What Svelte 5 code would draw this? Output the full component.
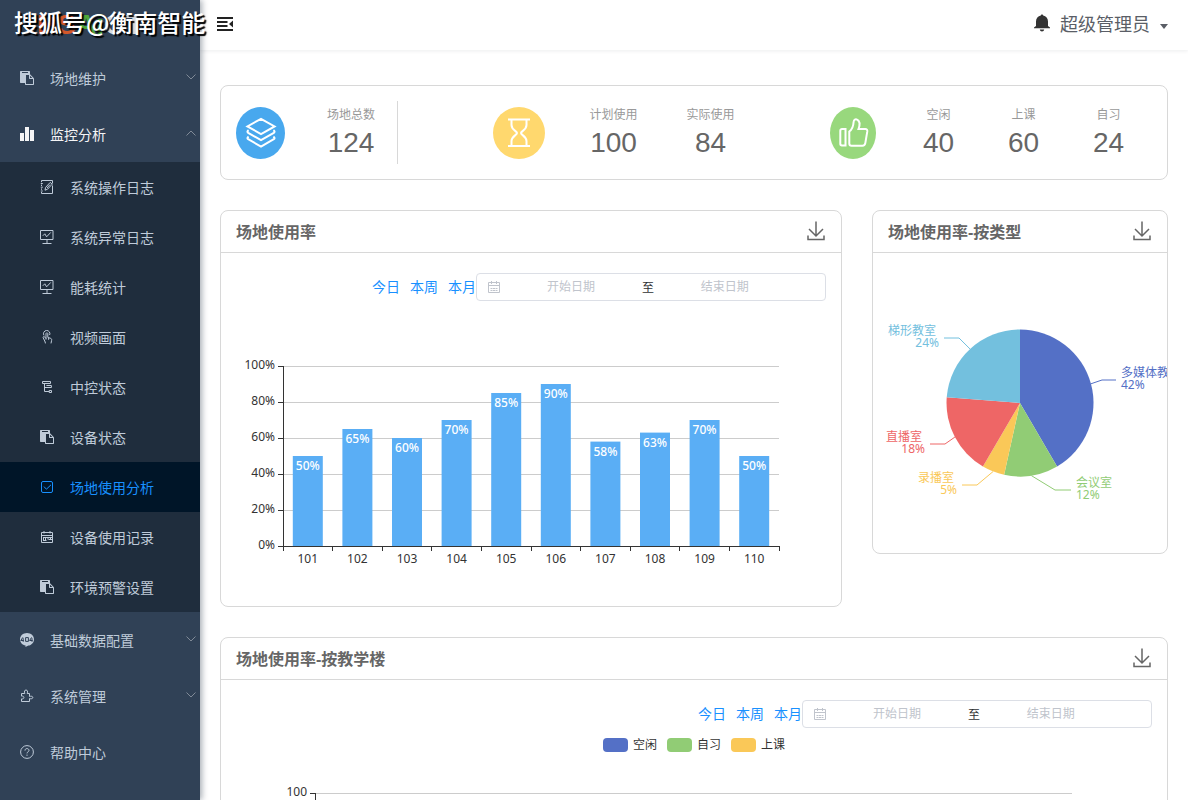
<script lang="ts">
	type IconName =
		| 'clipboard'
		| 'chart'
		| 'edit'
		| 'board'
		| 'touch'
		| 'nested'
		| 'check'
		| 'calendar'
		| 'bubble'
		| 'puzzle'
		| 'help';

	interface MenuItem {
		title: string;
		icon: IconName;
		open?: boolean;
		children?: MenuItem[];
	}

	interface Slice {
		name: string;
		value: number;
		color: string;
		// leader line end and elbow, relative to the pie centre
		elbow: [number, number];
		end: [number, number];
	}

	let menu = $state<MenuItem[]>([
		{ title: '场地维护', icon: 'clipboard', children: [] },
		{
			title: '监控分析',
			icon: 'chart',
			open: true,
			children: [
				{ title: '系统操作日志', icon: 'edit' },
				{ title: '系统异常日志', icon: 'board' },
				{ title: '能耗统计', icon: 'board' },
				{ title: '视频画面', icon: 'touch' },
				{ title: '中控状态', icon: 'nested' },
				{ title: '设备状态', icon: 'clipboard' },
				{ title: '场地使用分析', icon: 'check' },
				{ title: '设备使用记录', icon: 'calendar' },
				{ title: '环境预警设置', icon: 'clipboard' }
			]
		},
		{ title: '基础数据配置', icon: 'bubble', children: [] },
		{ title: '系统管理', icon: 'puzzle', children: [] },
		{ title: '帮助中心', icon: 'help' }
	]);

	let active = $state('场地使用分析');

	const ranges = ['今日', '本周', '本月'];

	const rooms = [
		{ name: '101', rate: 50 },
		{ name: '102', rate: 65 },
		{ name: '103', rate: 60 },
		{ name: '104', rate: 70 },
		{ name: '105', rate: 85 },
		{ name: '106', rate: 90 },
		{ name: '107', rate: 58 },
		{ name: '108', rate: 63 },
		{ name: '109', rate: 70 },
		{ name: '110', rate: 50 }
	];

	const slices: Slice[] = [
		{ name: '多媒体教室', value: 42, color: '#5470c6', elbow: [82, -23], end: [96, -23] },
		{ name: '会议室', value: 12, color: '#91cc75', elbow: [35, 87], end: [51, 87] },
		{ name: '录播室', value: 5, color: '#fac858', elbow: [-43, 82], end: [-58, 82] },
		{ name: '直播室', value: 18, color: '#ee6666', elbow: [-75, 41], end: [-90, 41] },
		{ name: '梯形教室', value: 24, color: '#73c0de', elbow: [-61, -65], end: [-76, -65] }
	];

	const legend = [
		{ name: '空闲', color: '#5470c6' },
		{ name: '自习', color: '#91cc75' },
		{ name: '上课', color: '#fac858' }
	];

	const ticks = [0, 20, 40, 60, 80, 100];
	const top = 60;
	const plotHeight = 180;
	const barWidth = 30;

	let barChartWidth = $state(590);
	let pieWidth = $state(294);
	let buildingWidth = $state(916);

	let left = $derived(Math.round(barChartWidth * 0.08));
	let right = $derived(barChartWidth - left);
	let band = $derived((right - left) / rooms.length);

	const yOf = (v: number) => top + plotHeight * (1 - v / 100);

	let cx = $derived(pieWidth / 2);
	const cy = 150;
	let radius = $derived(pieWidth / 4);

	function polar(angle: number): [number, number] {
		return [cx + radius * Math.sin(angle), cy - radius * Math.cos(angle)];
	}

	let pie = $derived.by(() => {
		const total = slices.reduce((sum, s) => sum + s.value, 0);
		let start = 0;
		return slices.map((s) => {
			const end = start + (s.value / total) * Math.PI * 2;
			const [x1, y1] = polar(start);
			const [x2, y2] = polar(end);
			const [mx, my] = polar((start + end) / 2);
			const side = s.end[0] > 0 ? 1 : -1;
			const line = [
				[mx, my],
				[cx + s.elbow[0], cy + s.elbow[1]],
				[cx + s.end[0], cy + s.end[1]]
			];
			start = end;
			return {
				...s,
				side,
				path: `M${cx} ${cy}L${x1} ${y1}A${radius} ${radius} 0 0 1 ${x2} ${y2}Z`,
				points: line.map((p) => p.join(',')).join(' '),
				x: cx + s.end[0] + side * 5,
				y: cy + s.end[1]
			};
		});
	});
</script>

{#snippet icon(name: IconName)}
	{#if name === 'clipboard'}
		<svg class="icon" viewBox="0 0 128 128" fill="currentColor">
			<path
				d="M54.857 118.857h64V73.143H89.143c-1.902 0-3.52-.668-4.855-2.002-1.335-1.335-2.002-2.954-2.002-4.855V36.57H54.857v82.286zM73.143 16v-4.571a2.2 2.2 0 0 0-.677-1.61 2.198 2.198 0 0 0-1.609-.676H20.571c-.621 0-1.158.225-1.609.676a2.198 2.198 0 0 0-.676 1.61V16a2.2 2.2 0 0 0 .676 1.61c.451.45.988.676 1.61.676h50.285c.622 0 1.158-.226 1.61-.677.45-.45.676-.987.676-1.609zm18.286 48h21.357L91.43 42.642V64zM128 73.143v48c0 1.902-.667 3.52-2.002 4.855-1.335 1.335-2.953 2.002-4.855 2.002H52.57c-1.901 0-3.52-.667-4.854-2.002-1.335-1.335-2.003-2.953-2.003-4.855v-11.429H6.857c-1.902 0-3.52-.667-4.855-2.002C.667 106.377 0 104.759 0 102.857v-96c0-1.902.667-3.52 2.002-4.855C3.337.667 4.955 0 6.857 0h77.714c1.902 0 3.52.667 4.855 2.002 1.335 1.335 2.003 2.953 2.003 4.855V30.29c1 .622 1.856 1.29 2.569 2.003l29.147 29.147c1.335 1.335 2.478 3.145 3.429 5.43.95 2.287 1.426 4.383 1.426 6.291z"
			/>
		</svg>
	{:else if name === 'chart'}
		<svg class="icon" viewBox="0 0 128 128" fill="currentColor">
			<path
				d="M0 54.857h36.571V128H0V54.857zM91.429 27.43H128V128H91.429V27.429zM45.714 0h36.572v128H45.714V0z"
			/>
		</svg>
	{:else if name === 'edit'}
		<svg class="icon line" viewBox="0 0 14 14">
			<path d="M1.5 2.200V.5h11v3M1.500 4.600v1.400M1.500 8.400v1.400M1.500 12v1.500h11V5.500M.800 3.500h2M.800 7.200h2M.800 11h2" />
			<path d="M5 10.200l.6-2.800L10.200 2.400l2 1.800-4.600 5zM7 8l3-3.400" />
		</svg>
	{:else if name === 'board'}
		<svg class="icon line" viewBox="0 0 14 14">
			<path d="M.5.5h12.500v9H.5zM7 9.500v3.500M2.500 13.500h9M2.800 5.800l2-2 1.800 3 4.200-4.400" />
		</svg>
	{:else if name === 'touch'}
		<svg class="icon line" viewBox="0 0 14 14">
			<path d="M4 5.400a3.200 3.200 0 1 1 5.600-.4M6 9.600V3.400a1 1 0 0 1 1.800 0v4l3 1c.8.4 1 1 .8 2L11 13.400" />
			<path d="M6 8.600l-1.400-1.800c-.8-.6-1.800 0-1.400 1l2 4.200.2 1.400M8.600 8v1.800" />
		</svg>
	{:else if name === 'nested'}
		<svg class="icon line" viewBox="0 0 14 14">
			<path d="M2.500 1.500h8v2h-8zM4.500 3.500v8h4.700M4.500 7.500h4.700M6.400 5.500h5v2h-5M9.200 10.500h2.300v2H9.200z" />
		</svg>
	{:else if name === 'check'}
		<svg class="icon line" viewBox="0 0 14 14">
			<rect x="1.5" y="1.5" width="11" height="11" rx="1.5" />
			<path d="M4 6.6l2.4 2.6L11 4.8" />
		</svg>
	{:else if name === 'calendar'}
		<svg class="icon line" viewBox="0 0 14 14">
			<path d="M1.500 2.500h11v10h-11zM1.500 5.500h11M4 1v2.500M10 1v2.500M3 7.500h9.500M3 10.500h3.500M8.500 9.500h4" />
			<path d="M3.500 7.500v3M5.500 7.500v3M8 7.500v2M10.500 7.500v2" />
		</svg>
	{:else if name === 'bubble'}
		<svg class="icon" viewBox="0 0 14 14">
			<path fill="currentColor" d="M7 0c4 0 7 2.800 7 6.200s-2.600 6-5.600 6.400L5.400 14l.2-1.600C2.400 11.800 0 9.400 0 6.400 0 2.800 3 0 7 0z" />
			<path
				class="cut"
				d="M2.800 4.400L.8 7.500h3M3.200 5.200v3.600M5.600 4.600h2.800v3.800H5.600zM11.600 4.400L9.600 7.500h3M12 5.200v3.600"
			/>
		</svg>
	{:else if name === 'puzzle'}
		<svg class="icon line" viewBox="0 0 14 14">
			<path
				d="M1.500 4.500h3.300C4 2.600 4.600 1 6 1s2 1.600 1.200 3.500h2.300v3c1.600-.6 3.300-.2 3.300 1s-1.700 1.600-3.300 1v3h-8v-2.600c1.600.2 2.400-.4 2.400-1.400s-.8-1.600-2.400-1.400z"
			/>
		</svg>
	{:else}
		<svg class="icon line" viewBox="0 0 14 14">
			<circle cx="7" cy="7" r="6.400" />
			<path d="M5 5.600C5 4.200 5.800 3.600 7 3.600s2 .8 2 1.800c0 1.400-2 1.400-2 3M7 9.600v1.200" />
		</svg>
	{/if}
{/snippet}

{#snippet filters()}
	<div class="filters">
		{#each ranges as range}
			<a href="#{range}">{range}</a>
		{/each}
		<div class="picker">
			<svg class="picker-icon" viewBox="0 0 14 14">
				<path d="M1.500 2.500h11v10h-11zM1.500 5.500h11M4.500 1v3M9.500 1v3M3.500 8.500h2M6 8.500h2M8.500 8.500h2M3.500 10.500h2M6 10.500h2M8.500 10.500h2" />
			</svg>
			<input type="text" placeholder="开始日期" aria-label="开始日期" />
			<span>至</span>
			<input type="text" placeholder="结束日期" aria-label="结束日期" />
		</div>
	</div>
{/snippet}

{#snippet cardHeader(title: string)}
	<header class="card-header">
		<h2>{title}</h2>
		<button class="download" aria-label="下载">
			<svg viewBox="0 0 20 20">
				<path d="M10 .5v14M3 8l7 7 7-7M2 14.500v4h16v-4" />
			</svg>
		</button>
	</header>
{/snippet}

<div class="app">
	<aside class="sidebar">
		<div class="logo">
			<span class="logo-orange">HS</span><span class="logo-green">Ai</span><span>OT</span>
			<div class="watermark">搜狐号@衡南智能</div>
		</div>
		<nav>
			{#each menu as item}
				{#if item.children}
					<button class="menu-item" class:opened={item.open} onclick={() => (item.open = !item.open)}>
						{@render icon(item.icon)}
						<span>{item.title}</span>
						<svg class="arrow" class:up={item.open} viewBox="0 0 12 12"><path d="M1.500 3.500L6 8l4.500-4.500" /></svg>
					</button>
					{#if item.open}
						<div class="submenu">
							{#each item.children as child}
								<a
									href="#{child.title}"
									class="menu-item"
									class:active={active === child.title}
									onclick={() => (active = child.title)}
								>
									{@render icon(child.icon)}
									<span>{child.title}</span>
								</a>
							{/each}
						</div>
					{/if}
				{:else}
					<a href="#{item.title}" class="menu-item">
						{@render icon(item.icon)}
						<span>{item.title}</span>
					</a>
				{/if}
			{/each}
		</nav>
	</aside>

	<div class="page">
		<header class="navbar">
			<button class="hamburger" aria-label="菜单">
				<svg viewBox="0 0 16 16">
					<path d="M0 2h16M0 6h10.500M0 10h10.500M0 14h16" />
					<path class="solid" d="M16 4.500v7L12 8z" />
				</svg>
			</button>
			<button class="user">
				<svg class="bell" viewBox="0 0 18 18">
					<path d="M9 .5c.7 0 1.200.4 1.200 1.100C13 2.200 15 4.500 15 7.500v4.500l2 1.500v.8H1v-.8L3 12V7.500c0-3 2-5.300 4.800-5.900C7.800.9 8.300.5 9 .5zM6.800 15.400h4.400c-.2 1.200-1 2-2.200 2s-2-.8-2.200-2z" />
				</svg>
				<span>超级管理员</span>
				<svg class="caret" viewBox="0 0 8 5"><path d="M0 0h8L4 5z" /></svg>
			</button>
		</header>

		<main>
			<section class="card stats">
				<div class="stat-group">
					<svg class="badge total" viewBox="0 0 49 52">
						<ellipse cx="24.500" cy="26" rx="24.500" ry="26" />
						<path
							d="M25 11.800L38.600 19.400 25 27 11.400 19.400zM12.600 23.200c-1.200.8-1.600 1.800-.4 2.600L25 33.200l12.800-7.400c1.200-.8.8-1.800-.4-2.600M12.600 29.600c-1.200.8-1.600 1.800-.4 2.600L25 39.600l12.800-7.400c1.200-.8.8-1.800-.4-2.600"
						/>
					</svg>
					<div class="figures divided">
						<div class="figure"><span>场地总数</span><strong>124</strong></div>
					</div>
				</div>
				<div class="stat-group">
					<svg class="badge usage" viewBox="0 0 52 52">
						<circle cx="26" cy="26" r="26" />
						<path
							d="M15 12.500h22M15 39h22M18.500 12.500v5.500c0 5 5.500 6 5.500 8s-5.500 3.500-5.500 8v5M33.500 12.500v5.500c0 5-5.500 6-5.500 8s5.500 3.500 5.500 8v5"
						/>
					</svg>
					<div class="figures">
						<div class="figure"><span>计划使用</span><strong>100</strong></div>
						<div class="figure"><span>实际使用</span><strong>84</strong></div>
					</div>
				</div>
				<div class="stat-group">
					<svg class="badge status" viewBox="0 0 46 52">
						<ellipse cx="23" cy="26" rx="23" ry="26" />
						<path
							d="M12 22h3.500v16.500H12a1.700 1.700 0 0 1-1.700-1.700V23.700A1.700 1.700 0 0 1 12 22zM19.300 36.500V24.500c3-2 4-4.500 4.300-9.500.2-2.400 2-3.200 3.500-2.400 3 1.500 3 5 1.400 9.400h6.800c1.400 0 2.200 1 2 2.400l-2 11.800c-.3 1.600-1.300 2.600-2.800 2.600H21.600c-1.400 0-2.300-.9-2.300-2.300z"
						/>
					</svg>
					<div class="figures">
						<div class="figure"><span>空闲</span><strong>40</strong></div>
						<div class="figure"><span>上课</span><strong>60</strong></div>
						<div class="figure"><span>自习</span><strong>24</strong></div>
					</div>
				</div>
			</section>

			<div class="charts">
				<section class="card wide">
					{@render cardHeader('场地使用率')}
					<div class="card-body">
						{@render filters()}
						<div class="chart" bind:clientWidth={barChartWidth}>
							<svg width="100%" height="300">
								{#each ticks as tick}
									<line class="split" x1={left} x2={right} y1={yOf(tick) + 0.5} y2={yOf(tick) + 0.5} />
									<line class="axis" x1={left - 5} x2={left} y1={yOf(tick) + 0.5} y2={yOf(tick) + 0.5} />
									<text x={left - 8} y={yOf(tick) + 3} text-anchor="end">{tick}%</text>
								{/each}
								{#each rooms as room, i}
									{@const mid = left + band * (i + 0.5)}
									<rect
										class="bar"
										x={mid - barWidth / 2}
										y={yOf(room.rate)}
										width={barWidth}
										height={yOf(0) - yOf(room.rate)}
									/>
									<text class="bar-label" x={mid} y={yOf(room.rate) + 14} text-anchor="middle">{room.rate}%</text>
									<text x={mid} y={yOf(0) + 17} text-anchor="middle">{room.name}</text>
								{/each}
								<!-- Axes -->
								<path class="axis" d="M{left + 0.5} {top}V{yOf(0)}M{left} {yOf(0) + 0.5}H{right + 1}" />
								{#each { length: rooms.length + 1 } as _, i}
									{@const x = Math.floor(left + band * i) + 0.5}
									<line class="axis" x1={x} x2={x} y1={yOf(0)} y2={yOf(0) + 5} />
								{/each}
							</svg>
						</div>
					</div>
				</section>

				<section class="card">
					{@render cardHeader('场地使用率-按类型')}
					<div class="pie" bind:clientWidth={pieWidth}>
						<svg width="100%" height="300">
							{#each pie as slice}
								<path d={slice.path} fill={slice.color} />
								<polyline points={slice.points} stroke={slice.color} fill="none" />
								<g fill={slice.color} text-anchor={slice.side > 0 ? 'start' : 'end'}>
									<text class="slice-label" x={slice.side > 0 ? slice.x : slice.x - 3} y={slice.y - 3}>{slice.name}</text>
									<text class="slice-label" x={slice.x} y={slice.y + 9}>{slice.value}%</text>
								</g>
							{/each}
						</svg>
					</div>
				</section>
			</div>

			<section class="card">
				{@render cardHeader('场地使用率-按教学楼')}
				<div class="card-body">
					{@render filters()}
					<div class="legend">
						{#each legend as entry}
							<span class="legend-item"><i style="background: {entry.color}"></i>{entry.name}</span>
						{/each}
					</div>
					<div class="building" bind:clientWidth={buildingWidth}>
						<svg width="100%" height="240">
							{#each ticks as tick}
								{@const y = yOf(tick) - 18.5}
								<line class="split" x1="80" x2={buildingWidth - 80} y1={y} y2={y} />
								<line class="axis" x1="74" x2="79" y1={y} y2={y} />
								<text x="71" y={y + 2} text-anchor="end">{tick}</text>
							{/each}
							<line class="axis" x1="79.5" x2="79.5" y1={yOf(100) - 19} y2={yOf(0) - 19} />
						</svg>
					</div>
				</div>
			</section>
		</main>
	</div>
</div>

<style>
	:global(body) {
		background: #fff;
		font-family: 'Liberation Sans', 'Noto Sans CJK SC', sans-serif;
		color: #303133;
	}

	button {
		border: 0;
		padding: 0;
		background: none;
		font: inherit;
		color: inherit;
		cursor: pointer;
	}

	a {
		text-decoration: none;
	}

	svg {
		display: block;
		flex: none;
	}

	.app {
		display: flex;
		height: 100vh;
		overflow: hidden;
	}

	/* Sidebar */
	.sidebar {
		position: relative;
		z-index: 2;
		flex: none;
		width: 200px;
		background: #304156;
		box-shadow: 2px 0 6px rgba(0, 21, 41, 0.35);
	}

	.logo {
		position: relative;
		display: flex;
		align-items: center;
		height: 50px;
		padding-left: 37px;
		font-size: 28px;
		font-weight: 700;
		line-height: 28px;
		color: #d8dbe0;
	}

	.logo-orange {
		color: #d4582a;
	}

	.logo-green {
		color: #4fa83a;
	}

	.watermark {
		position: absolute;
		top: 4px;
		left: 14px;
		font-family: 'Noto Sans CJK SC', sans-serif;
		font-size: 24px;
		font-weight: 500;
		line-height: 36px;
		white-space: nowrap;
		color: #fff;
		text-shadow: 2px 2px 1px #000;
	}

	.menu-item {
		display: flex;
		align-items: center;
		box-sizing: border-box;
		width: 100%;
		height: 56px;
		padding: 0 3px 0 20px;
		font-size: 14px;
		color: #bfcbd9;
	}

	.menu-item span {
		flex: 1;
		text-align: left;
	}

	.menu-item.opened {
		color: #f4f4f5;
	}

	.submenu {
		background: #1f2d3d;
	}

	.submenu .menu-item {
		height: 50px;
		padding-left: 40px;
	}

	.submenu .menu-item.active {
		background: #001528;
		color: #1890ff;
	}

	.icon {
		width: 14px;
		height: 14px;
		margin-right: 16px;
	}

	.line {
		fill: none;
		stroke: currentColor;
	}

	.cut {
		fill: none;
		stroke: #304156;
	}

	.arrow {
		width: 12px;
		height: 12px;
		margin-bottom: 2px;
		fill: none;
		stroke: #808a97;
	}

	.arrow.up {
		transform: rotate(180deg);
	}

	/* Top bar */
	.page {
		display: flex;
		flex: 1;
		flex-direction: column;
		min-width: 0;
	}

	.navbar {
		z-index: 1;
		display: flex;
		flex: none;
		align-items: center;
		justify-content: space-between;
		height: 48px;
		padding: 0 20px 2px 17px;
		background: #fff;
		box-shadow: 0 1px 4px rgba(0, 21, 41, 0.08);
	}

	.hamburger svg {
		width: 16px;
		height: 16px;
		fill: none;
		stroke: #222;
		stroke-width: 2;
	}

	.hamburger .solid {
		fill: #222;
		stroke: none;
	}

	.user {
		display: flex;
		align-items: center;
		font-size: 18px;
		line-height: 26px;
		color: #5a5e66;
	}

	.user span {
		padding-top: 2px;
	}

	.bell {
		width: 18px;
		height: 18px;
		margin: 0 9px 2px 0;
		fill: #333;
	}

	.caret {
		width: 8px;
		height: 5px;
		margin: 4px 0 0 10px;
		fill: #5a5e66;
	}

	/* Content */
	main {
		flex: 1;
		padding: 35px 20px;
		overflow-y: auto;
		scrollbar-width: none;
	}

	.card {
		border: 1px solid #d8d8d8;
		border-radius: 8px;
		background: #fff;
	}

	.card-header {
		display: flex;
		align-items: center;
		justify-content: space-between;
		height: 39px;
		padding: 0 15px 2px;
		border-bottom: 1px solid #d8d8d8;
	}

	h2 {
		margin: 0;
		font-size: 16px;
		font-weight: 700;
		color: #666;
	}

	.download svg {
		width: 20px;
		height: 20px;
		fill: none;
		stroke: #666;
		stroke-width: 1.5;
	}

	.card-body {
		padding: 20px 15px 0;
	}

	.stats {
		display: grid;
		grid-template-columns: 257fr 337fr 322fr;
		padding: 15px;
	}

	.stat-group {
		display: flex;
		align-items: center;
		gap: 20px;
	}

	.badge {
		height: 52px;
		fill: none;
		stroke: #fff;
		stroke-width: 2;
	}

	.badge ellipse,
	.badge circle {
		stroke: none;
	}

	.total ellipse {
		fill: #48a8ee;
	}

	.usage circle {
		fill: #ffd86e;
	}

	.status ellipse {
		fill: #98d87d;
	}

	.figures {
		display: flex;
	}

	.figure {
		display: flex;
		flex-direction: column;
		align-items: center;
		box-sizing: border-box;
		width: 97px;
		height: 63px;
		padding-top: 5px;
	}

	.status + .figures .figure {
		width: 85px;
	}

	.divided {
		border-right: 1px solid #d8d8d8;
	}

	.divided .figure {
		width: 92px;
	}

	.figure span {
		font-size: 12px;
		line-height: 18px;
		color: #999;
	}

	.figure strong {
		font-size: 28px;
		font-weight: 400;
		line-height: 38px;
		color: #666;
	}

	.charts {
		display: grid;
		grid-template-columns: repeat(3, minmax(0, 1fr));
		gap: 30px;
		align-items: start;
		margin: 30px 0;
	}

	.wide {
		grid-column: span 2;
	}

	.filters {
		display: flex;
		align-items: center;
		justify-content: flex-end;
		height: 28px;
		font-size: 14px;
	}

	.filters a {
		padding-bottom: 2px;
		color: #1890ff;
	}

	.filters a + a {
		margin-left: 10px;
	}

	.picker {
		display: flex;
		align-items: center;
		box-sizing: border-box;
		width: 350px;
		height: 28px;
		padding: 0 10px;
		border: 1px solid #dcdfe6;
		border-radius: 4px;
		font-size: 12px;
	}

	.picker-icon {
		width: 14px;
		height: 14px;
		margin-right: 6px;
		fill: none;
		stroke: #c0c4cc;
	}

	.picker input {
		width: 39%;
		box-sizing: border-box;
		padding: 0;
		border: 0;
		outline: none;
		background: none;
		font: inherit;
		text-align: center;
		color: #606266;
	}

	.picker input::placeholder {
		color: #c0c4cc;
	}

	.picker span {
		width: 26px;
		padding-bottom: 2px;
		text-align: center;
	}

	.chart {
		margin-top: 5px;
	}

	text {
		font-family: 'Noto Sans', 'Noto Sans CJK SC', sans-serif;
		font-size: 12px;
		fill: #333;
	}

	.bar {
		fill: #5aaef5;
	}

	text.bar-label {
		fill: #fff;
		font-weight: 500;
	}

	text.slice-label {
		fill: inherit;
	}

	.split {
		stroke: #ccc;
	}

	.axis {
		fill: none;
		stroke: #333;
	}

	.legend {
		display: flex;
		justify-content: center;
		gap: 10px;
		height: 14px;
		margin-top: 10px;
	}

	.legend-item {
		display: flex;
		align-items: center;
		gap: 5px;
		font-size: 12px;
		line-height: 14px;
		color: #333;
	}

	.legend-item i {
		width: 25px;
		height: 14px;
		border-radius: 4px;
	}
</style>
